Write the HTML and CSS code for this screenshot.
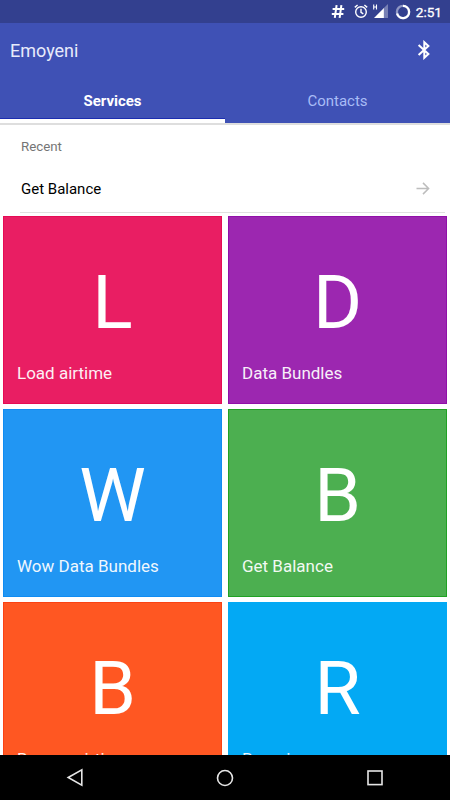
FILE: index.html
```
<!DOCTYPE html>
<html lang="en">

<head>
  <meta charset="UTF-8" />
  <meta name="viewport" content="width=device-width, initial-scale=1.0" />
  <title>Emoyeni</title>
  <link rel="stylesheet" href="styles.css">
</head>

<body>
  <div class="status-bar">
    <svg class="icon-hash" width="14" height="15" viewBox="0 0 14 15">
      <path d="M5.6 1.2 3.8 13.8M10.4 1.2 8.6 13.8M1.6 5h11.6M.8 10h11.6" />
    </svg>
    <svg class="icon-alarm" width="14" height="15" viewBox="0 0 14 15">
      <circle cx="7" cy="8" r="5.3" />
      <path d="M.8 3.4 3.6 1M13.2 3.4 10.4 1M7 4.8v3.5l2.3 1.5" />
    </svg>
    <svg class="icon-signal" width="15" height="15" viewBox="0 0 15 15">
      <path class="signal-dim" d="M15 0v14H10.6V4.2z" />
      <path class="signal-on" d="M10.9 4v10H1z" />
      <path class="signal-h" d="M.7.6v5M3.5.6v5M.7 3h2.8" />
    </svg>
    <svg class="icon-battery" width="16" height="16" viewBox="0 0 16 16">
      <circle class="ring-dim" cx="8" cy="8" r="6.1" />
      <path d="M8 1.9a6.1 6.1 0 1 1-5.9 7.6" />
    </svg>
    <span class="clock">2:51</span>
  </div>

  <header class="app-bar">
    <h1>Emoyeni</h1>
    <svg class="icon-bluetooth" width="14" height="20" viewBox="0 0 14 20">
      <path d="M1.6 4.9 11.4 14 7.3 17.8V2.2L11.4 6 1.6 15.1" />
    </svg>
  </header>

  <nav class="tabs">
    <a class="tab active">Services</a>
    <a class="tab">Contacts</a>
  </nav>

  <main class="content">
    <section class="recent">
      <h2>Recent</h2>
      <div class="recent-item">
        <span>Get Balance</span>
        <svg class="icon-arrow" width="14" height="13" viewBox="0 0 14 13">
          <path d="M.5 6.5h12M7 .9l5.6 5.6L7 12.1" />
        </svg>
      </div>
    </section>

    <section class="grid">
      <div class="tile pink">
        <span class="letter">L</span>
        <span class="label">Load airtime</span>
      </div>
      <div class="tile purple">
        <span class="letter">D</span>
        <span class="label">Data Bundles</span>
      </div>
      <div class="tile blue">
        <span class="letter">W</span>
        <span class="label">Wow Data Bundles</span>
      </div>
      <div class="tile green">
        <span class="letter">B</span>
        <span class="label">Get Balance</span>
      </div>
      <div class="tile orange">
        <span class="letter">B</span>
        <span class="label">Borrow airtime</span>
      </div>
      <div class="tile light-blue">
        <span class="letter">R</span>
        <span class="label">Roaming</span>
      </div>
    </section>
  </main>

  <footer class="nav-bar">
    <svg width="18" height="19" viewBox="0 0 18 19">
      <path d="M2.2 9.5 15.8 1.8v15.4z" />
    </svg>
    <svg width="18" height="18" viewBox="0 0 18 18">
      <circle cx="9" cy="9" r="7.5" />
    </svg>
    <svg width="18" height="18" viewBox="0 0 18 18">
      <rect x="2" y="2" width="14" height="13.6" />
    </svg>
  </footer>
</body>

</html>
```

FILE: styles.css
```
* {
  box-sizing: border-box;
}

body {
  margin: 0;
  height: 800px;
  display: flex;
  flex-direction: column;
  overflow: hidden;
  font-family: Roboto, sans-serif;
  background: #fff;
  color: #000;
}

svg {
  display: block;
  fill: none;
  stroke: #fff;
}

/* Status bar */
.status-bar {
  flex: none;
  height: 23px;
  display: flex;
  align-items: center;
  justify-content: flex-end;
  padding-right: 8px;
  background: #33408f;
}

.icon-hash {
  margin-right: 9px;
  stroke-width: 2;
}

.icon-alarm {
  margin-right: 5px;
  stroke-width: 1.4;
}

.icon-signal {
  margin-right: 7px;
  stroke: none;
}

.signal-dim {
  fill: #7780b4;
}

.signal-on {
  fill: #fff;
}

.signal-h {
  stroke: #fff;
  stroke-width: 1.1;
}

.icon-battery {
  margin-right: 5px;
  stroke-width: 2.3;
}

.ring-dim {
  stroke: #8f97c4;
}

.clock {
  font-size: 13.6px;
  font-weight: 400;
  line-height: 23px;
  color: #fff;
  padding-top: 1px;
  -webkit-text-stroke: 0.3px #fff;
}

/* App bar */
.app-bar {
  flex: none;
  height: 55px;
  display: flex;
  align-items: center;
  justify-content: space-between;
  padding: 0 19px 0 10px;
  background: #3f51b5;
}

.app-bar h1 {
  margin: 0;
  font-size: 18px;
  font-weight: 400;
  color: #e8ebfb;
}

.icon-bluetooth {
  margin-bottom: 1px;
  stroke-width: 2;
}

.tabs {
  flex: none;
  height: 45px;
  display: flex;
  background: #3f51b5;
  box-shadow: 0 2px 0 #dedede;
}

.tab {
  flex: 1;
  padding-top: 1px;
  text-align: center;
  font-size: 15px;
  line-height: 44px;
  color: #a9bcf5;
}

.tab.active {
  font-weight: 700;
  color: #fff;
  box-shadow: inset 0 -4px 0 #fff, inset 0 -5px 0 #1b2db0;
}

/* Recent services */
.content {
  flex: 1;
  min-height: 0;
  overflow: hidden;
}

.recent {
  height: 90px;
  margin: 0 5px 0 20px;
  border-bottom: 1px solid #e0e0e0;
}

.recent h2 {
  margin: 0;
  padding: 2px 0 0 1px;
  font-size: 13.3px;
  font-weight: 400;
  line-height: 44px;
  color: #757575;
}

.recent-item {
  display: flex;
  align-items: center;
  justify-content: space-between;
  height: 40px;
  padding: 0 15px 0 1px;
  font-size: 15px;
}

.icon-arrow {
  margin-bottom: 2px;
  stroke: #bdbdbd;
  stroke-width: 1.5;
}

/* Service tiles */
.grid {
  display: grid;
  grid-template-columns: 1fr 1fr;
  grid-auto-rows: 188px;
  gap: 5px 6px;
  padding: 3px;
}

.tile {
  display: flex;
  flex-direction: column;
  padding: 41px 13px 0;
  color: #fff;
  border: 1px solid;
}

.letter {
  font-size: 75px;
  line-height: 88px;
  text-align: center;
}

.label {
  font-size: 17px;
  line-height: 20px;
  margin-top: 17px;
  opacity: 0.93;
}

.pink {
  background: #e91e63;
  border-color: #e60b55;
}

.purple {
  background: #9c27b0;
  border-color: #910fa9;
}

.blue {
  background: #2196f3;
  border-color: #108cf2;
}

.green {
  background: #4caf50;
  border-color: #20a224;
}

.orange {
  background: #ff5722;
  border-color: #fb4213;
}

.light-blue {
  background: #03a9f4;
  border-color: #03a9f4;
}

/* Navigation bar */
.nav-bar {
  flex: none;
  height: 45px;
  display: flex;
  align-items: center;
  justify-content: space-between;
  padding: 0 66px;
  background: #000;
}

.nav-bar svg {
  stroke: #e6e6e6;
  stroke-width: 1.6;
}
```
